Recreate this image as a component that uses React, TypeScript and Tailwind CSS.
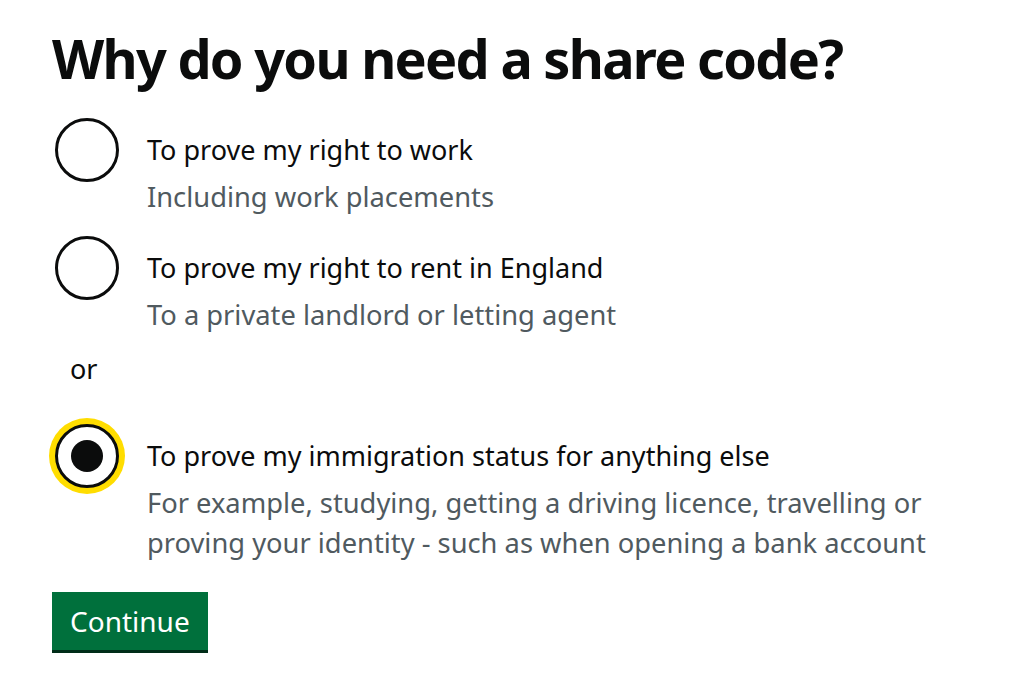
import React, { useState } from "react";

interface Option {
  value: string;
  label: string;
  hint: string[];
}

const options: Option[] = [
  { value: "work", label: "To prove my right to work", hint: ["Including work placements"] },
  {
    value: "rent",
    label: "To prove my right to rent in England",
    hint: ["To a private landlord or letting agent"],
  },
  {
    value: "other",
    label: "To prove my immigration status for anything else",
    hint: [
      "For example, studying, getting a driving licence, travelling or",
      "proving your identity - such as when opening a bank account",
    ],
  },
];

const Radio = ({ checked }: { checked: boolean }) => (
  <div
    className={`w-[76px] h-[76px] -m-[6px] shrink-0 rounded-full flex items-center justify-center ${
      checked ? "bg-[#ffdd00]" : "bg-transparent"
    }`}
  >
    <div className="w-[64px] h-[64px] rounded-full border-[3px] border-[#0b0c0c] bg-white flex items-center justify-center">
      {checked && <div className="w-[32px] h-[32px] rounded-full bg-[#0b0c0c]" />}
    </div>
  </div>
);

const RadioItem = ({
  option,
  checked,
  onSelect,
}: {
  option: Option;
  checked: boolean;
  onSelect: () => void;
}) => (
  <label className="flex cursor-pointer" onClick={onSelect}>
    <Radio checked={checked} />
    <div className="ml-[28px] pt-[12px]">
      <div className="text-[27px] leading-[40px] text-[#0b0c0c]">{option.label}</div>
      <div className="mt-[7px] text-[27.3px] leading-[40px] text-[#505a5f]">
        {option.hint.map((line) => (
          <div key={line}>{line}</div>
        ))}
      </div>
    </div>
  </label>
);

export default function App() {
  const [selected, setSelected] = useState("other");

  return (
    <div
      className="min-h-[675px] bg-white pl-[52px] pt-[22px]"
      style={{ fontFamily: '"Noto Sans", Arial, sans-serif' }}
    >
      <h1 className="text-[54px] leading-[72px] font-bold text-[#0b0c0c] tracking-[-1.7px]">
        Why do you need a share code?
      </h1>

      {/* Radios */}
      <div className="mt-[24px] pl-[3px]">
        <RadioItem option={options[0]} checked={selected === "work"} onSelect={() => setSelected("work")} />
        <div className="mt-[19px]">
          <RadioItem option={options[1]} checked={selected === "rent"} onSelect={() => setSelected("rent")} />
        </div>
        <div className="mt-[14px] ml-[15px] text-[27px] leading-[40px] text-[#0b0c0c]">or</div>
        <div className="mt-[35px]">
          <RadioItem option={options[2]} checked={selected === "other"} onSelect={() => setSelected("other")} />
        </div>
      </div>

      <button className="mt-[29px] bg-[#00703c] shadow-[0_3px_0_#002d18] text-white text-[28px] leading-[40px] px-[18px] pt-[9px] pb-[9px]">
        Continue
      </button>
    </div>
  );
}
